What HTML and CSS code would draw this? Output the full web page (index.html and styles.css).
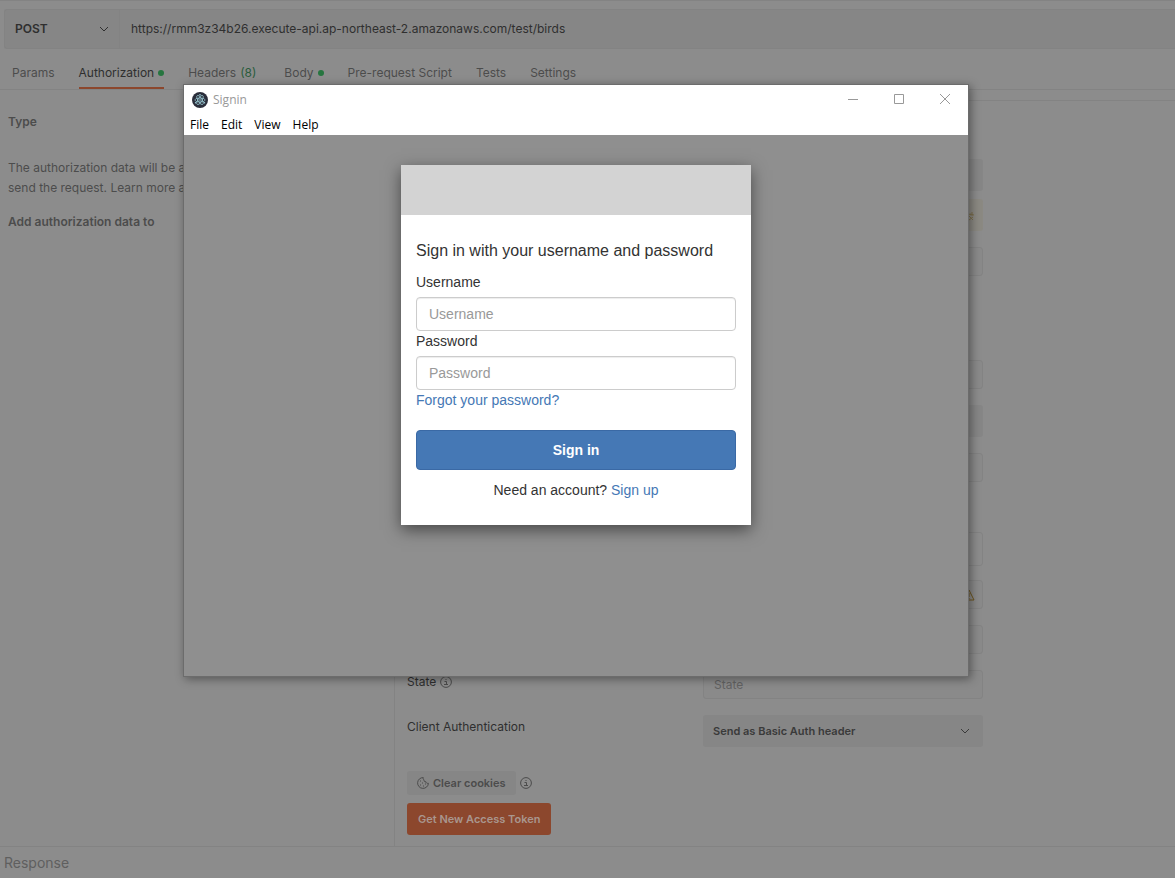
FILE: index.html
```html
<!DOCTYPE html>
<html lang="en">
<head>
    <meta charset="UTF-8">
    <meta name="viewport" content="width=device-width, initial-scale=1.0">
    <title>Signin</title>
    <link rel="stylesheet" href="styles.css">
</head>
<body>

<!-- Icons used more than once -->
<svg class="sprite" aria-hidden="true">
    <symbol id="icon-chevron" viewBox="0 0 10 10">
        <path d="M1 3l4 4 4-4" fill="none" stroke="currentColor"/>
    </symbol>
    <symbol id="icon-info" viewBox="0 0 12 12">
        <circle cx="6" cy="6" r="5.4" fill="none" stroke="currentColor"/>
        <path d="M4.500 5.500h2v3M4 8.500h4M5.500 3.500h1" fill="none" stroke="currentColor"/>
    </symbol>
</svg>

<div class="app">
    <div class="request-bar">
        <div class="select method">
            <select aria-label="Method"><option>POST</option></select>
            <svg class="chevron"><use href="#icon-chevron"/></svg>
        </div>
        <input class="url" type="text" aria-label="Request URL" value="https://rmm3z34b26.execute-api.ap-northeast-2.amazonaws.com/test/birds">
    </div>

    <nav class="tabs">
        <a href="#">Params</a>
        <a href="#" class="active">Authorization <i class="dot"></i></a>
        <a href="#">Headers <span class="count">(8)</span></a>
        <a href="#">Body <i class="dot"></i></a>
        <a href="#">Pre-request Script</a>
        <a href="#">Tests</a>
        <a href="#">Settings</a>
    </nav>

    <main class="content">
        <aside class="auth-info">
            <h2>Type</h2>
            <p>The authorization data will be automatically generated when you send the request. Learn more about authorization</p>
            <h2>Add authorization data to</h2>
        </aside>

        <section class="auth-form">
            <div class="fields">
                <div class="group">
                    <div class="row token">
                        <div class="select filled">
                            <select aria-label="Access Token"></select>
                            <svg class="chevron"><use href="#icon-chevron"/></svg>
                        </div>
                        <div class="notice">
                            <svg viewBox="0 0 14 14">
                                <path d="M6 1l2 2M8 6l2 1M11 4v4M9 6l4 1M8 8l4 4M12 9l-4 3M2 6l3 2" fill="none" stroke="currentColor"/>
                            </svg>
                        </div>
                    </div>
                    <div class="row"><input type="text" aria-label="Header Prefix"></div>
                </div>
                <div class="group">
                    <div class="row"><input type="text" aria-label="Token Name"></div>
                    <div class="row">
                        <div class="select filled">
                            <select aria-label="Grant Type"></select>
                            <svg class="chevron"><use href="#icon-chevron"/></svg>
                        </div>
                    </div>
                    <div class="row"><input type="text" aria-label="Callback URL"></div>
                </div>
                <div class="group">
                    <div class="row">
                        <div class="select outlined">
                            <select aria-label="Auth URL"></select>
                            <svg class="chevron"><use href="#icon-chevron"/></svg>
                        </div>
                    </div>
                    <div class="row warned">
                        <input type="text" aria-label="Client ID">
                        <svg class="warning" viewBox="0 0 12 12">
                            <path d="M6 1l5 10H1z" fill="none" stroke="currentColor"/>
                            <path d="M6 4v4M6 9v1" fill="none" stroke="currentColor"/>
                        </svg>
                    </div>
                    <div class="row"><input type="text" aria-label="Scope"></div>
                    <div class="row">
                        <label for="state">State <svg class="info"><use href="#icon-info"/></svg></label>
                        <input type="text" id="state" placeholder="State">
                    </div>
                    <div class="row">
                        <label for="client-auth">Client Authentication</label>
                        <div class="select filled">
                            <select id="client-auth"><option>Send as Basic Auth header</option></select>
                            <svg class="chevron"><use href="#icon-chevron"/></svg>
                        </div>
                    </div>
                </div>
            </div>

            <div class="cookies">
                <button class="btn-clear" type="button">
                    <svg viewBox="0 0 12 12">
                        <path d="M6.3.6A5.4 5.4 0 1 0 11.4 6.300c-1.300.3-2.300-.3-2.400-1.500C7.500 5 6.700 4 7.100 2.900 6.200 2.500 5.900 1.600 6.300.6z" fill="none" stroke="currentColor"/>
                        <path d="M3 4h1M5 6h1M3 8h1M6 9h1M8 7h1" stroke="currentColor"/>
                    </svg>
                    Clear cookies
                </button>
                <svg class="info"><use href="#icon-info"/></svg>
            </div>
            <button class="btn-token" type="button">Get New Access Token</button>
        </section>
    </main>

    <footer class="response">Response</footer>
</div>

<!-- Signin window -->
<div class="window">
    <header class="title-bar">
        <svg class="logo" viewBox="0 0 16 16">
            <circle cx="8" cy="8" r="8" fill="#2b2e3b"/>
            <g fill="none" stroke="#9fd0da" stroke-width=".7">
                <ellipse cx="8" cy="8" rx="5.200" ry="2"/>
                <ellipse cx="8" cy="8" rx="5.200" ry="2" transform="rotate(60 8 8)"/>
                <ellipse cx="8" cy="8" rx="5.200" ry="2" transform="rotate(120 8 8)"/>
            </g>
            <g fill="#9fd0da">
                <circle cx="8" cy="8" r=".8"/>
                <circle cx="8" cy="2.800" r=".8"/>
                <circle cx="3.600" cy="10.800" r=".8"/>
                <circle cx="12.400" cy="10.800" r=".8"/>
            </g>
        </svg>
        <span class="title">Signin</span>
        <button type="button" aria-label="Minimize"><svg viewBox="0 0 10 10"><path d="M0 5.500h10"/></svg></button>
        <button type="button" aria-label="Maximize"><svg viewBox="0 0 10 10"><path d="M.5.5h9v9h-9z"/></svg></button>
        <button type="button" aria-label="Close"><svg viewBox="0 0 10 10"><path d="M0 0l10 10M10 0L0 10"/></svg></button>
    </header>
    <nav class="menu-bar">
        <a href="#">File</a>
        <a href="#">Edit</a>
        <a href="#">View</a>
        <a href="#">Help</a>
    </nav>
    <div class="window-body">
        <div class="login">
            <div class="banner"></div>
            <form>
                <h1>Sign in with your username and password</h1>
                <label for="username">Username</label>
                <input type="text" id="username" placeholder="Username">
                <label for="password">Password</label>
                <input type="password" id="password" placeholder="Password">
                <a href="#">Forgot your password?</a>
                <button type="submit">Sign in</button>
                <p>Need an account? <a href="#">Sign up</a></p>
            </form>
        </div>
    </div>
</div>

</body>
</html>
```

FILE: styles.css
```css
:root {
    --bg: #8c8c8c;
    --field: #868686;
    --line: #838383;
    --text: #2f2f2f;
    --muted: #4c4c4c;
    --green: #26753f;
    --orange: #8c472d;
    --link: #4578b5;
}

* {
    box-sizing: border-box;
}

body {
    margin: 0;
    background-color: var(--bg);
    color: var(--text);
    font-family: Inter, sans-serif;
    font-size: 12px;
    line-height: 20px;
    overflow: hidden;
}

button, input, select {
    font: inherit;
    color: inherit;
}

a {
    color: inherit;
    text-decoration: none;
}

.sprite {
    display: none;
}

.app {
    display: flex;
    flex-direction: column;
    min-height: 100vh;
    border-top: 1px solid var(--line);
}

/* Request bar */
.request-bar {
    display: flex;
    height: 40px;
    margin: 8px 0 0 4px;
    background-color: var(--field);
    border: 1px solid var(--line);
    border-right: none;
    border-radius: 3px 0 0 3px;
}

.select {
    position: relative;
}

.select select {
    width: 100%;
    height: 100%;
    padding: 0 10px;
    appearance: none;
    background: none;
    border: none;
}

.chevron {
    position: absolute;
    top: 50%;
    right: 13px;
    width: 10px;
    height: 10px;
    margin-top: -5px;
}

.method {
    width: 115px;
    border-right: 1px solid var(--line);
    font-weight: 600;
}

.method .chevron {
    right: 10px;
}

.url {
    flex: 1;
    padding: 0 11px;
    background: none;
    border: none;
}

/* Tabs */
.tabs {
    display: flex;
    gap: 24px;
    height: 41px;
    padding: 0 12px;
    border-bottom: 1px solid var(--line);
    color: var(--muted);
}

.tabs a {
    display: flex;
    align-items: center;
    gap: 4px;
    padding-top: 9px;
    border-bottom: 2px solid transparent;
}

.tabs .active {
    color: var(--text);
    border-bottom-color: var(--orange);
}

.count {
    margin-right: 4px;
    color: #2a5c3c;
}

.dot {
    width: 6px;
    height: 6px;
    border-radius: 50%;
    background-color: var(--green);
}

/* Content */
.content {
    display: flex;
    flex: 1;
}

.auth-info {
    width: 394px;
    padding: 22px 14px 0 8px;
    color: var(--muted);
}

.auth-info h2 {
    margin: 0;
    font-size: 12px;
    font-weight: 600;
}

.auth-info p {
    margin: 26px 0 14px;
}

.auth-form {
    flex: 1;
    margin-top: 10px;
    padding: 58px 12px 11px;
    border: 1px solid var(--line);
    border-width: 1px 0 0 1px;
}

.fields {
    display: flex;
    flex-direction: column;
    max-width: 576px;
}

.group {
    display: flex;
    flex-direction: column;
    gap: 16px;
    margin-bottom: 84px;
}

.group + .group {
    margin-bottom: 50px;
}

.group:last-child {
    margin-bottom: 24px;
}

.row {
    display: grid;
    grid-template-columns: 1fr 280px;
}

.row > * {
    grid-column: 2;
}

.row label {
    grid-column: 1;
    padding-top: 2px;
}

.row input {
    height: 29px;
    padding: 0 10px;
    background-color: #8a8a8a;
    border: 1px solid var(--line);
    border-radius: 3px;
}

.row input::placeholder {
    color: #636363;
}

.filled {
    height: 32px;
    background-color: var(--field);
    border-radius: 3px;
    color: #3a3a3a;
    font-size: 11px;
    font-weight: 600;
}

.outlined {
    height: 34px;
    margin-bottom: -2px;
    border: 1px solid var(--line);
    border-radius: 3px;
}

.token {
    row-gap: 8px;
}

.notice {
    display: flex;
    align-items: center;
    justify-content: flex-end;
    height: 32px;
    padding-right: 8px;
    background-color: #8b8982;
    border-radius: 3px;
    color: #7d6f4c;
}

.notice svg {
    width: 14px;
    height: 14px;
}

.warned {
    position: relative;
}

.warning {
    position: absolute;
    top: 9px;
    right: 8px;
    width: 12px;
    height: 12px;
    color: #6e551c;
}

.info {
    width: 12px;
    height: 12px;
    color: var(--muted);
    vertical-align: -2px;
}

.cookies {
    display: flex;
    align-items: center;
    gap: 4px;
    margin-bottom: 8px;
}

.btn-clear {
    display: flex;
    align-items: center;
    gap: 4px;
    height: 24px;
    padding: 0 10px;
    background-color: var(--field);
    border: none;
    border-radius: 3px;
    color: var(--muted);
    font-size: 11px;
    font-weight: 600;
}

.btn-clear svg {
    width: 12px;
    height: 12px;
}

.btn-token {
    height: 32px;
    padding: 0 11px;
    background-color: var(--orange);
    border: none;
    border-radius: 3px;
    color: #a9968e;
    font-size: 11px;
    font-weight: 600;
}

.response {
    height: 32px;
    padding: 6px 4px;
    border-top: 1px solid var(--line);
    color: #5f5f5f;
    font-size: 14px;
}

/* Signin window */
.window {
    position: absolute;
    top: 84px;
    left: 183px;
    width: 786px;
    height: 593px;
    display: flex;
    flex-direction: column;
    background-color: #8f8f8f;
    border: 1px solid #6c6c6c;
    box-shadow: 2px 2px 9px rgba(0, 0, 0, 0.4);
    font-family: "Open Sans", sans-serif;
}

.title-bar {
    display: flex;
    align-items: center;
    height: 30px;
    padding-left: 8px;
    background-color: #fff;
    color: #999;
}

.logo {
    width: 16px;
    height: 16px;
}

.title {
    flex: 1;
    padding-left: 5px;
}

.title-bar button {
    display: grid;
    place-items: center;
    align-self: flex-start;
    width: 46px;
    height: 28px;
    padding: 0;
    background: none;
    border: none;
}

.title-bar button svg {
    width: 10px;
    height: 10px;
    fill: none;
    stroke: #999;
}

.menu-bar {
    display: flex;
    gap: 12px;
    height: 20px;
    padding: 0 6px;
    background-color: #fff;
    color: #000;
}

.window-body {
    flex: 1;
    padding: 30px;
    color: #333;
    font-family: "Liberation Sans", Arial, sans-serif;
    font-size: 14px;
}

.login {
    max-width: 350px;
    margin: 0 auto;
    background-color: #fff;
    box-shadow: 0 5px 15px rgba(0, 0, 0, 0.5);
}

.banner {
    height: 50px;
    background-color: #d3d3d3;
}

.login form {
    display: flex;
    flex-direction: column;
    padding: 25px 15px;
}

.login h1 {
    margin: 0 0 10px;
    font-size: 16px;
    font-weight: 400;
    line-height: 22px;
}

.login label {
    margin-bottom: 5px;
}

.login input {
    height: 34px;
    padding: 6px 12px;
    background-color: #fff;
    border: 1px solid #ccc;
    border-radius: 4px;
    box-shadow: inset 0 1px 1px rgba(0, 0, 0, 0.075);
}

.login input::placeholder {
    color: #999;
}

.login a {
    color: var(--link);
}

.login button {
    height: 40px;
    margin: 20px 0 10px;
    background-color: var(--link);
    border: 1px solid #3a69a5;
    border-radius: 4px;
    color: #fff;
    font-weight: 700;
}

.login p {
    margin: 0;
    text-align: center;
}
```
